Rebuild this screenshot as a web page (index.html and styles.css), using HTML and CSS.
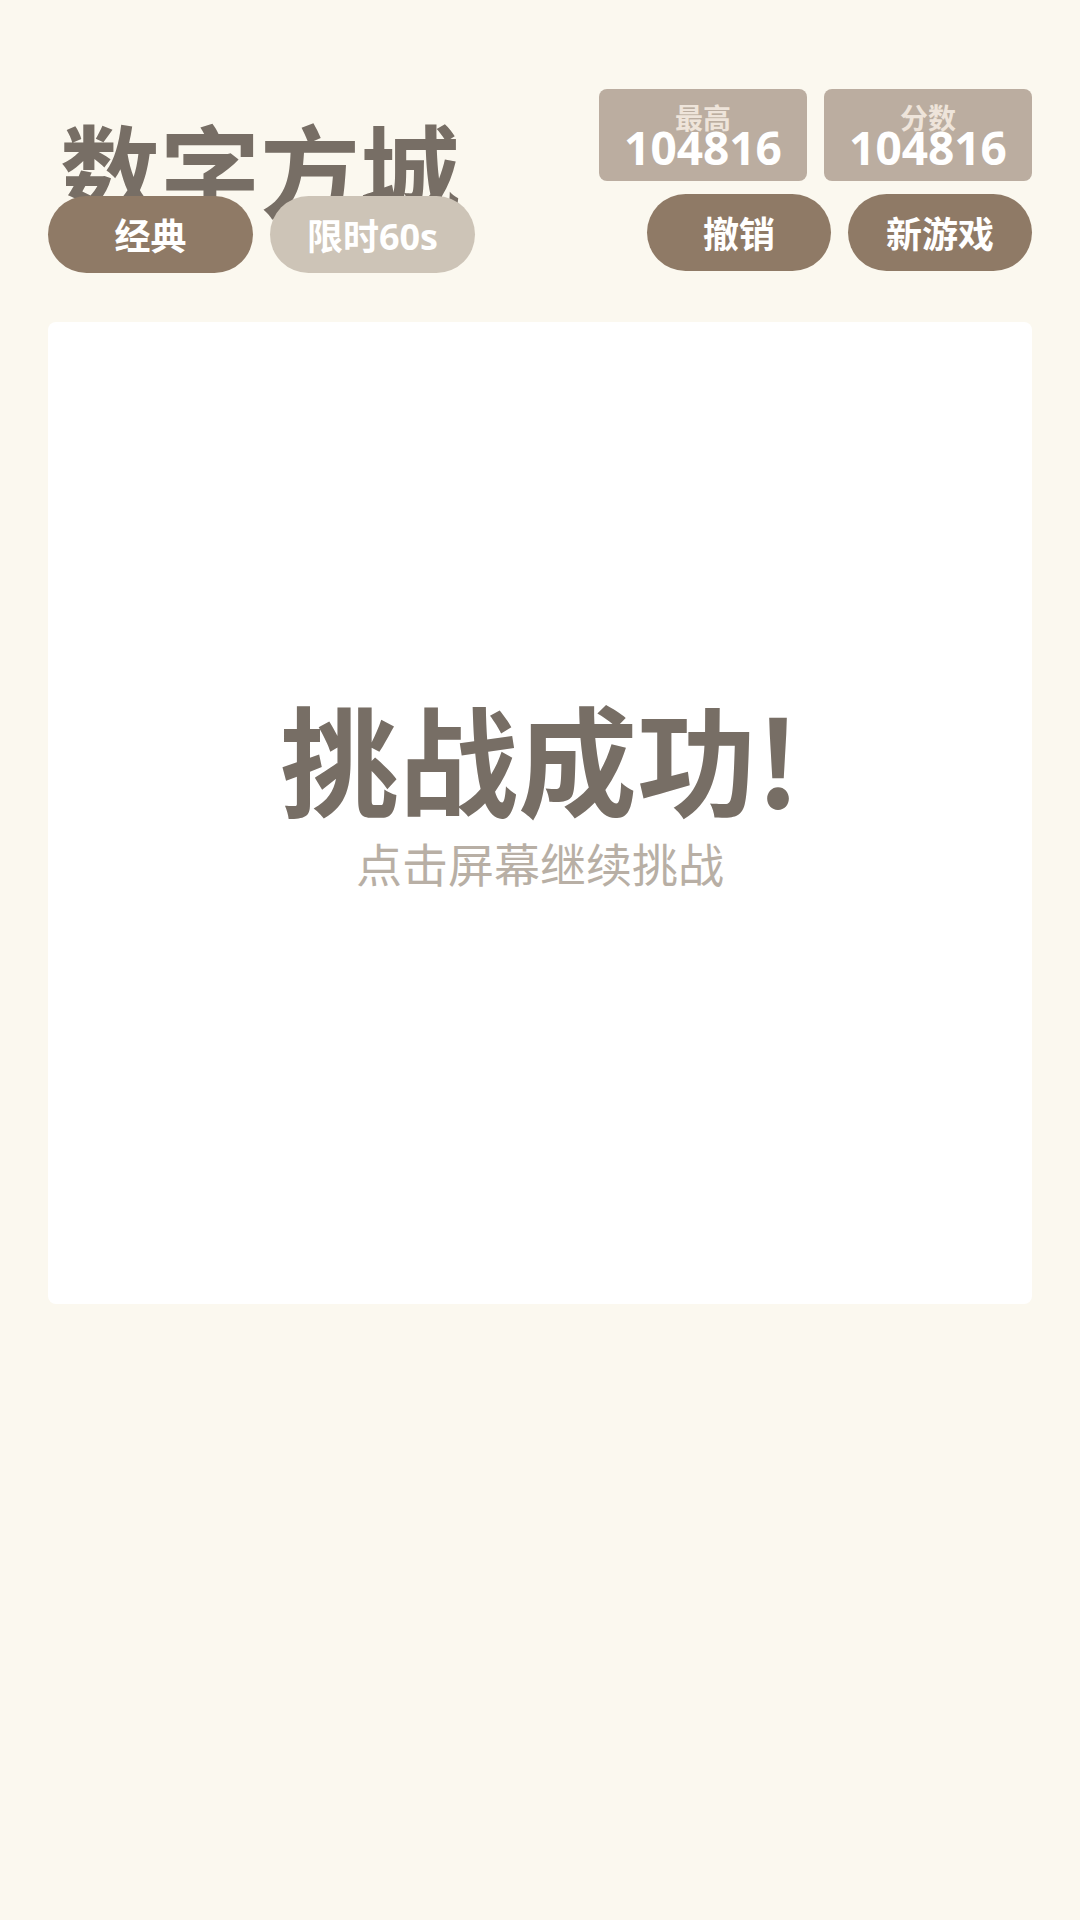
FILE: index.html
```html
<!DOCTYPE html>
<html>
<head>
  <title>数字方城</title>
  <meta charset="UTF-8">
  <link rel="stylesheet" href="styles.css">
</head>
<body>
  <div class="container">
    <div class="header">
      <div class="header-left">
        <h1 class="title">数字方城</h1>
        <div class="btn-row">
          <button class="btn btn-mode active">经典</button>
          <button class="btn btn-mode">限时60s</button>
        </div>
      </div>
      <div class="header-right">
        <div class="score-row">
          <div class="score-box">
            <div class="score-label">最高</div>
            <div class="score-value">104816</div>
          </div>
          <div class="score-box">
            <div class="score-label">分数</div>
            <div class="score-value">104816</div>
          </div>
        </div>
        <div class="btn-row">
          <button class="btn btn-action">撤销</button>
          <button class="btn btn-action">新游戏</button>
        </div>
      </div>
    </div>

    <!-- board with win message -->
    <div class="board">
      <div class="message">
        <div class="message-title">挑战成功!</div>
        <div class="message-sub">点击屏幕继续挑战</div>
      </div>
    </div>
  </div>
</body>
</html>
```

FILE: styles.css
```css
:root {
  --bg: #fbf8ef;
  --text: #776e65;
  --brown: #8f7a66;
  --muted-btn: #cdc4b7;
  --score-bg: #bbada0;
  --score-label: #eee4da;
  --sub-text: #b8afa5;
  --white: #fff;
}
html, body { margin: 0; padding: 0; }
body {
  width: 1080px;
  min-height: 1920px;
  background-color: var(--bg);
  color: var(--text);
  font-family: "Open Sans", "Noto Sans CJK SC", sans-serif;
}
.container { padding: 89px 48px 0; }
.header { display: flex; justify-content: space-between; align-items: flex-start; }
.header-left { display: flex; flex-direction: column; }
.title {
  font-family: "Noto Sans CJK SC", sans-serif;
  font-size: 100px;
  line-height: 100px;
  font-weight: 700;
  color: var(--text);
  margin: 28px 0 -21px 0;
  padding-left: 12px;
  white-space: nowrap;
}
.btn-row { display: flex; gap: 17px; }
.header-right { display: flex; flex-direction: column; align-items: flex-end; gap: 13px; }
.score-row { display: flex; gap: 17px; }
.score-box {
  width: 208px;
  height: 92px;
  box-sizing: border-box;
  padding-top: 14px;
  background-color: var(--score-bg);
  border-radius: 8px;
  text-align: center;
}
.score-label {
  font-family: "Noto Sans CJK SC", sans-serif;
  font-size: 28px;
  line-height: 28px;
  font-weight: 700;
  color: var(--score-label);
}
.score-value {
  font-family: "Open Sans", sans-serif;
  font-size: 46px;
  line-height: 46px;
  font-weight: 700;
  color: var(--white);
  margin-top: -7px;
}
.btn {
  display: flex;
  align-items: center;
  justify-content: center;
  height: 77px;
  padding: 0;
  border: none;
  border-radius: 39px;
  font-family: "Open Sans", "Noto Sans CJK SC", sans-serif;
  font-size: 36px;
  font-weight: 700;
  color: var(--white);
  background-color: var(--brown);
  cursor: pointer;
}
.btn-mode { width: 205px; background-color: var(--muted-btn); }
.btn-mode.active { background-color: var(--brown); }
.btn-action { width: 184px; }
.board {
  margin-top: 49px;
  width: 984px;
  height: 982px;
  background-color: var(--white);
  border-radius: 8px;
  display: flex;
  align-items: center;
  justify-content: center;
}
.message { display: flex; flex-direction: column; align-items: center; padding-bottom: 46px; }
.message-title {
  font-family: "Noto Sans CJK SC", sans-serif;
  font-size: 119px;
  line-height: 120px;
  font-weight: 700;
  color: var(--text);
}
.message-sub {
  font-family: "Noto Sans CJK SC", sans-serif;
  font-size: 46px;
  line-height: 46px;
  font-weight: 400;
  color: var(--sub-text);
  margin-top: 23px;
}
```
